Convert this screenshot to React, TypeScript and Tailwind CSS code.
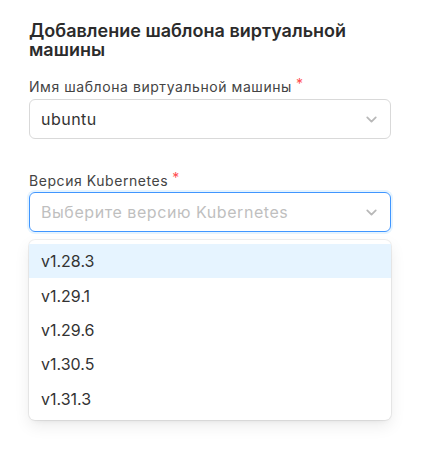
import { ChevronDown } from 'lucide-react';

const versions = ['v1.28.3', 'v1.29.1', 'v1.29.6', 'v1.30.5', 'v1.31.3'];

export default function App() {
  return (
    <div className="min-h-screen bg-white pl-[29px] pr-[31px] pt-[21px] text-[#333]" style={{ fontFamily: 'Inter, "Noto Sans", sans-serif' }}>
      <h1 className="text-[18px] font-semibold leading-[19px] text-[#2b2b2b] w-[340px]">Добавление шаблона виртуальной машины</h1>

      <div className="mt-[17px]">
        <label className="flex text-[14px] leading-[22px] tracking-[0.04em] text-[#444]">
          Имя шаблона виртуальной машины
          <span className="ml-[4px] text-[#ff4d4f] text-[14px] leading-[16px]">*</span>
        </label>
        <div className="mt-[1px] flex h-[40px] items-center justify-between rounded-[6px] border border-[#d9d9d9] pl-[11px] pr-[10px]">
          <span className="text-[16px] tracking-[0.03em] text-[#333]">ubuntu</span>
          <ChevronDown size={17} strokeWidth={2.5} className="text-[#b8b8b8]" />
        </div>
      </div>

      <div className="mt-[31px]">
        <label className="flex text-[14px] leading-[22px] tracking-[0.04em] text-[#444]">
          Версия Kubernetes
          <span className="ml-[4px] text-[#ff4d4f] text-[14px] leading-[16px]">*</span>
        </label>
        <div className="flex h-[40px] items-center justify-between rounded-[6px] border border-[#4096ff] pl-[11px] pr-[10px] shadow-[0_0_0_2px_rgba(5,145,255,0.1)]">
          <span className="text-[16px] tracking-[0.035em] text-[#bfbfbf]">Выберите версию Kubernetes</span>
          <ChevronDown size={17} strokeWidth={2.5} className="text-[#b8b8b8]" />
        </div>
        <div className="mt-[8px] rounded-[6px] bg-white py-[4px] shadow-[0_6px_16px_0_rgba(0,0,0,0.08),0_3px_6px_-4px_rgba(0,0,0,0.12),0_0_0_1px_rgba(0,0,0,0.06)]">
          {versions.map((v, i) => (
            <div
              key={v}
              className={`flex h-[34.4px] items-center px-[12px] text-[16px] text-[#333] ${i === 0 ? 'bg-[#e6f4ff]' : ''}`}
            >
              {v}
            </div>
          ))}
        </div>
      </div>
    </div>
  );
}
